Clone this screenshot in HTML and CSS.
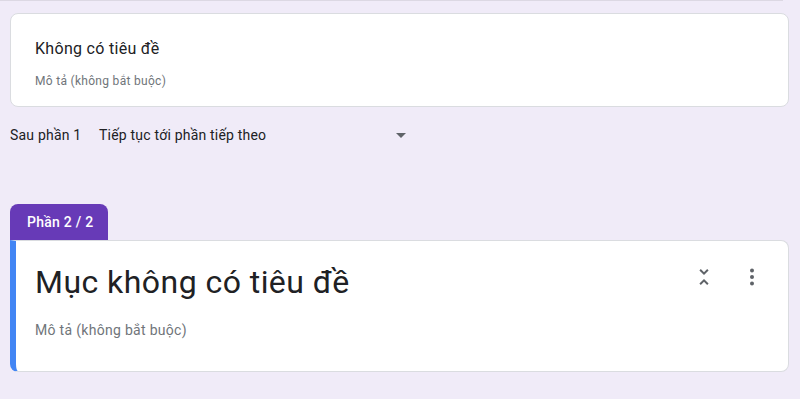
FILE: index.html
```html
<!DOCTYPE html>
<html>
<head>
    <meta charset="utf-8">
    <title>Biểu mẫu không có tiêu đề</title>
    <link rel="stylesheet" href="styles.css">
</head>
<body>

    <div class="prev-edge"></div>

    <!-- header card of section 1 -->
    <div class="card head-card">
        <div class="head-title">Không có tiêu đề</div>
        <div class="head-desc">Mô tả (không bắt buộc)</div>
    </div>

    <div class="after-row">
        <span class="after-label">Sau phần 1</span>
        <div class="after-select">
            <span>Tiếp tục tới phần tiếp theo</span>
            <span class="caret"></span>
        </div>
    </div>

    <!-- section 2 -->
    <div class="section">
        <div class="section-tab">Phần 2 / 2</div>
        <div class="card section-card">
            <div class="section-head">
                <div class="section-title">Mục không có tiêu đề</div>
                <div class="section-tools">
                    <button class="icon-btn" title="Thu gọn phần">
                        <svg viewBox="0 0 24 24" width="24" height="24"><path d="M7.41 18.59L8.83 20 12 16.83 15.17 20l1.41-1.41L12 14l-4.59 4.59zm9.18-13.18L15.17 4 12 7.17 8.83 4 7.41 5.41 12 10l4.59-4.59z"/></svg>
                    </button>
                    <button class="icon-btn" title="Tùy chọn khác">
                        <svg viewBox="0 0 24 24" width="24" height="24"><circle cx="12" cy="5.5" r="2"/><circle cx="12" cy="12" r="2"/><circle cx="12" cy="18.5" r="2"/></svg>
                    </button>
                </div>
            </div>
            <div class="section-desc">Mô tả (không bắt buộc)</div>
        </div>
    </div>

</body>
</html>
```

FILE: styles.css
```css
body {
    font-family: Roboto, "Noto Sans", Arial, sans-serif;
    color: #202124;
    background-color: #f0ebf8;
    margin: 0;
    padding: 0 11px 0 10px;
}

/* bottom edge of the card above, cut off by the top of the window */
.prev-edge {
    height: 1px;
    margin: 0 6px 0 -10px;
    background-color: #dcd8e3;
}

.card {
    background-color: white;
    border: 1px solid #dadce0;
    border-radius: 8px;
}

.head-card {
    margin-top: 12px;
    padding: 23px 24px 17px 24px;
}

.head-title {
    font-size: 16px;
    line-height: 24px;
    letter-spacing: 0.3px;
}

.head-desc {
    margin-top: 12px;
    font-size: 12px;
    line-height: 16px;
    letter-spacing: 0.3px;
    color: #70757a;
}

.after-row {
    display: flex;
    align-items: center;
    margin-top: 18px;
    font-size: 14px;
    line-height: 20px;
    letter-spacing: 0.2px;
}

.after-label {
    width: 89px;
}

.after-select {
    display: flex;
    align-items: center;
    justify-content: space-between;
    width: 307px;
}

.caret {
    width: 0;
    height: 0;
    margin-top: 1px;
    border-left: 5px solid transparent;
    border-right: 5px solid transparent;
    border-top: 5px solid #5f6368;
}

.section {
    margin-top: 59px;
}

.section-tab {
    display: inline-block;
    height: 36px;
    padding: 0 15px 0 17px;
    line-height: 36px;
    font-size: 14px;
    font-weight: 500;
    letter-spacing: 0.25px;
    color: white;
    background-color: #673ab7;
    border-radius: 8px 8px 0 0;
}

.section-card {
    border-left: 6px solid #4285f4;
    border-radius: 0 8px 8px 8px;
    padding: 12px 12px 31px 19px;
}

.section-head {
    display: flex;
    align-items: flex-start;
    justify-content: space-between;
}

.section-title {
    margin-top: 9px;
    font-size: 32px;
    line-height: 40px;
    letter-spacing: 0.45px;
}

.section-tools {
    display: flex;
}

.icon-btn {
    width: 48px;
    height: 48px;
    padding: 12px;
    border: none;
    background: none;
    cursor: pointer;
    fill: #5f6368;
}

.icon-btn svg {
    display: block;
}

.section-desc {
    margin-top: 18px;
    font-size: 14px;
    line-height: 20px;
    letter-spacing: 0.3px;
    color: #70757a;
}
```
